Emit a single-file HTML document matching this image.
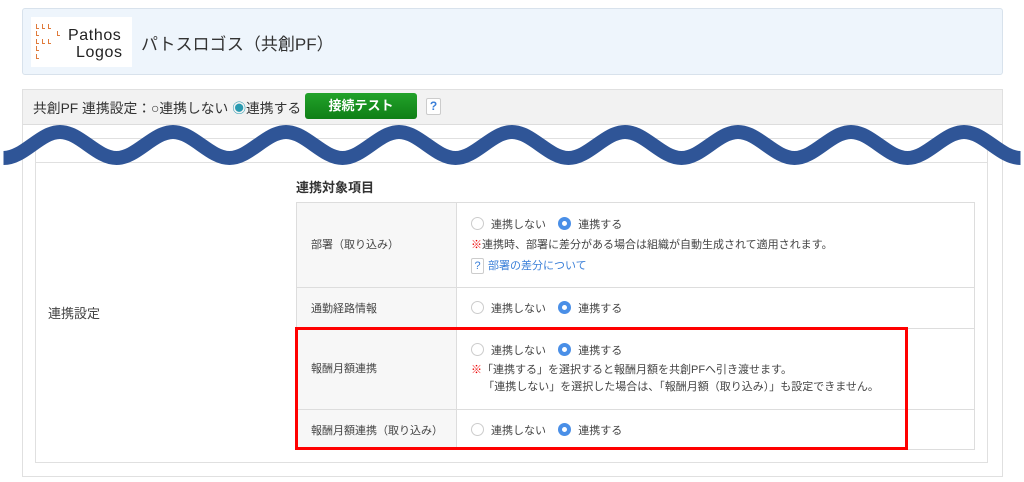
<!DOCTYPE html>
<html><head><meta charset="utf-8"><style>
*{box-sizing:border-box;margin:0;padding:0}
body{width:1024px;height:482px;background:#fff;font-family:"Liberation Sans","Noto Sans CJK JP",sans-serif;color:#333;position:relative;overflow:hidden}
.abs{position:absolute}
.r{display:inline-block;width:13px;height:13px;border-radius:50%;border:1px solid #ccc;vertical-align:-2px;margin-right:7px;background:#fff}
.r.on{border:4px solid #4a8fe7}
.cell{position:absolute;font-size:11px;color:#444}
.m{position:absolute;width:3px;height:5px;border-left:1px solid #e07a3a;border-bottom:1px solid #e07a3a}
</style></head><body>
<div class="abs" style="left:22px;top:8px;width:981px;height:67px;background:#eef5fc;border:1px solid #d8e2ec;border-radius:3px"></div>
<div class="abs" style="left:31px;top:17px;width:101px;height:50px;background:#fff"></div>
<div class="m" style="left:36px;top:24px"></div><div class="m" style="left:42px;top:24px"></div><div class="m" style="left:48px;top:24px"></div>
<div class="m" style="left:36px;top:31px"></div><div class="m" style="left:57px;top:31px"></div>
<div class="m" style="left:36px;top:39px"></div><div class="m" style="left:42px;top:39px"></div><div class="m" style="left:48px;top:39px"></div>
<div class="m" style="left:36px;top:46px"></div>
<div class="m" style="left:36px;top:54px"></div>
<div class="abs" style="left:68px;top:27px;font-size:16px;line-height:17px;color:#222;letter-spacing:0.6px">Pathos<br><span style="padding-left:8px">Logos</span></div>
<div class="abs" style="left:141px;top:30px;font-size:17px;color:#333">パトスロゴス（共創PF）</div>

<div class="abs" style="left:22px;top:89px;width:981px;height:388px;border:1px solid #e0e0e0"></div>
<div class="abs" style="left:23px;top:90px;width:979px;height:35px;background:#f2f2f2;border-bottom:1px solid #ddd"></div>
<div class="abs" style="left:33px;top:97px;font-size:13.8px;color:#333">共創PF 連携設定：○連携しない <span style="color:#2a9ab0">◉</span>連携する</div>
<div class="abs" style="left:305px;top:93px;width:112px;height:26px;background:linear-gradient(#22a22a,#0f7f16);border-radius:3px;color:#fff;font-weight:bold;font-size:13px;text-align:center;line-height:26px">接続テスト</div>
<div class="abs" style="left:426px;top:98px;width:15px;height:17px;border:1px solid #ccc;border-radius:2px;background:#fff;color:#3a7fd8;font-size:12px;text-align:center;line-height:15px;font-weight:bold">?</div>

<div class="abs" style="left:35px;top:138px;width:953px;height:325px;border:1px solid #e0e0e0"></div>
<div class="abs" style="left:36px;top:162px;width:951px;height:1px;background:#e0e0e0"></div>
<div class="abs" style="left:48px;top:303px;font-size:13px;color:#444">連携設定</div>
<div class="abs" style="left:296px;top:177px;font-size:13px;font-weight:bold;color:#333">連携対象項目</div>

<div class="abs" style="left:296px;top:202px;width:679px;height:248px;border:1px solid #ddd"></div>
<div class="abs" style="left:297px;top:203px;width:160px;height:246px;background:#f7f7f7;border-right:1px solid #ddd"></div>
<div class="abs" style="left:297px;top:287px;width:677px;height:1px;background:#ddd"></div>
<div class="abs" style="left:297px;top:328px;width:677px;height:1px;background:#ddd"></div>
<div class="abs" style="left:297px;top:409px;width:677px;height:1px;background:#ddd"></div>

<div class="cell" style="left:311px;top:236px">部署（取り込み）</div>
<div class="cell" style="left:471px;top:216px"><span class="r"></span>連携しない&nbsp;&nbsp;&nbsp;&nbsp;<span class="r on"></span>連携する</div>
<div class="cell" style="left:471px;top:236px"><span style="color:#e00">※</span>連携時、部署に差分がある場合は組織が自動生成されて適用されます。</div>
<div class="cell" style="left:471px;top:257px;color:#3a7fd8"><span style="display:inline-block;width:13px;height:16px;border:1px solid #ccc;border-radius:2px;text-align:center;line-height:14px;margin-right:4px">?</span>部署の差分について</div>

<div class="cell" style="left:311px;top:300px">通勤経路情報</div>
<div class="cell" style="left:471px;top:300px"><span class="r"></span>連携しない&nbsp;&nbsp;&nbsp;&nbsp;<span class="r on"></span>連携する</div>

<div class="cell" style="left:311px;top:360px">報酬月額連携</div>
<div class="cell" style="left:471px;top:342px"><span class="r"></span>連携しない&nbsp;&nbsp;&nbsp;&nbsp;<span class="r on"></span>連携する</div>
<div class="cell" style="left:471px;top:362px;line-height:17px"><span style="color:#e00">※</span>「連携する」を選択すると報酬月額を共創PFへ引き渡せます。<br>&nbsp;&nbsp;&nbsp;&nbsp;「連携しない」を選択した場合は、「報酬月額（取り込み）」も設定できません。</div>

<div class="cell" style="left:311px;top:422px">報酬月額連携（取り込み）</div>
<div class="cell" style="left:471px;top:422px"><span class="r"></span>連携しない&nbsp;&nbsp;&nbsp;&nbsp;<span class="r on"></span>連携する</div>

<div class="abs" style="left:295px;top:327px;width:613px;height:123px;border:3px solid #f00"></div>

<svg class="abs" style="left:0;top:0" width="1024" height="482">
<path d="M3.5,158 C24,158 40,132 60,132 S96.5,158 116.5,158 S153,132 173,132 S209.5,158 229.5,158 S266,132 286,132 S322.5,158 342.5,158 S379,132 399,132 S435.5,158 455.5,158 S492,132 512,132 S548.5,158 568.5,158 S605,132 625,132 S661.5,158 681.5,158 S718,132 738,132 S774.5,158 794.5,158 S831,132 851,132 S887.5,158 907.5,158 S944,132 964,132 S1000.5,158 1020.5,158" fill="none" stroke="#2f5597" stroke-width="14"/>
</svg>
</body></html>
